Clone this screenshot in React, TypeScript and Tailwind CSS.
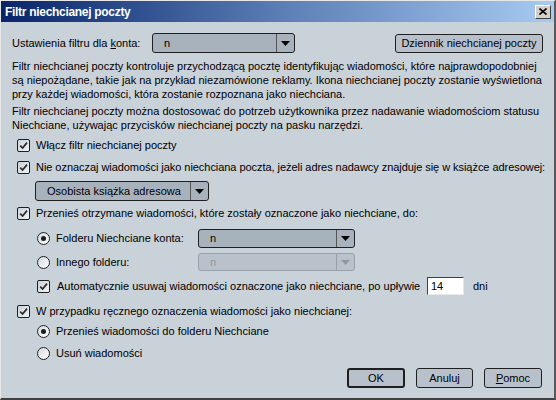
import React from "react";

const face = "font-['Liberation_Sans',Arial,sans-serif]";

function CheckBox() {
  return (
    <span className="flex h-[13px] w-[13px] shrink-0 items-center justify-center rounded-[2px] border border-[#1e1e1e] bg-linear-to-br from-[#c9d1d9] to-[#f2f4f6]">
      <svg width="9" height="9" viewBox="0 0 9 9">
        <path d="M1.2 4.6 L3.6 7 L8 1.6" stroke="#2a2a2a" strokeWidth="1.7" fill="none" />
      </svg>
    </span>
  );
}

function Radio({ checked }: { checked?: boolean }) {
  return (
    <span className="flex h-[13px] w-[13px] shrink-0 items-center justify-center rounded-full border border-[#222] bg-linear-to-br from-[#d3dae1] to-white">
      {checked && <span className="h-[5px] w-[5px] rounded-full bg-[#1c1c1c]" />}
    </span>
  );
}

function Arrow({ disabled }: { disabled?: boolean }) {
  return (
    <svg width="9" height="5" viewBox="0 0 9 5">
      <path d="M0 0 H9 L4.5 5 Z" fill={disabled ? "#8f98a2" : "#000"} />
    </svg>
  );
}

function Combo({
  value,
  className,
  disabled,
}: {
  value: string;
  className: string;
  disabled?: boolean;
}) {
  return (
    <div
      className={`flex items-stretch rounded-[3px] border ${
        disabled ? "border-[#96a0aa] bg-[#b9c2cb] text-[#8d96a0]" : "border-[#1f1f1f] bg-[#a8b2bd] text-black"
      } ${className}`}
    >
      <span className="flex flex-1 items-center pl-[11px]">{value}</span>
      <span
        className={`flex w-[18px] items-center justify-center border-l ${
          disabled ? "border-[#96a0aa]" : "border-[#555]"
        }`}
      >
        <Arrow disabled={disabled} />
      </span>
    </div>
  );
}

function Btn({ children, className = "" }: { children: React.ReactNode; className?: string }) {
  return (
    <button className={`flex items-center justify-center rounded-[3px] border border-[#1f1f1f] bg-[#b8c1cb] text-black ${className}`}>
      {children}
    </button>
  );
}

export default function App() {
  return (
    <div className={`${face} h-[400px] w-[556px] overflow-hidden whitespace-nowrap border-t border-l border-t-[#e8e8e8] border-l-[#e8e8e8] border-r-2 border-b-2 border-r-[#5a5a5a] border-b-[#404040] bg-[#c9d1d9] text-[11px] text-black`}>
      {/* title bar */}
      <div className="flex h-[21px] items-center bg-linear-to-r from-[#0a246a] via-[#5a7db4] to-[#a8cbf2] pl-[4px] pr-[3px]">
        <span className="text-[12px] font-bold tracking-[-0.3px] text-white">Filtr niechcianej poczty</span>
        <span className="ml-auto flex h-[14px] w-[16px] items-center justify-center border border-t-white border-l-white border-r-[#404040] border-b-[#404040] bg-[#d4d0c8]">
          <svg width="8" height="7" viewBox="0 0 8 7">
            <path d="M0.5 0.5 L7.5 6.5 M7.5 0.5 L0.5 6.5" stroke="#000" strokeWidth="1.6" />
          </svg>
        </span>
      </div>

      <div className="pl-[11px] pr-[11px]">
        {/* account row */}
        <div className="mt-[11px] flex h-[20px] items-center">
          <span className="w-[140px]">
            Ustawienia filtru dla <u>k</u>onta:
          </span>
          <Combo value="n" className="h-[20px] w-[143px]" />
          <Btn className="ml-auto h-[19px] w-[148px]">Dziennik niechcianej poczty</Btn>
        </div>

        {/* description */}
        <div className="mt-[6px] leading-[14px]">
          <div>Filtr niechcianej poczty kontroluje przychodzącą pocztę identyfikując wiadomości, które najprawdopodobniej</div>
          <div>są niepożądane, takie jak na przykład niezamówione reklamy. Ikona niechcianej poczty zostanie wyświetlona</div>
          <div>przy każdej wiadomości, która zostanie rozpoznana jako niechciana.</div>
        </div>
        <div className="mt-[3px] leading-[14px]">
          <div>Filtr niechcianej poczty można dostosować do potrzeb użytkownika przez nadawanie wiadomościom statusu</div>
          <div>Niechciane, używając przycisków niechcianej poczty na pasku narzędzi.</div>
        </div>

        {/* options */}
        <div className="mt-[5px] flex h-[16px] items-center gap-[6px] pl-[5px]">
          <CheckBox />
          <span>Włącz filtr niechcianej poczty</span>
        </div>
        <div className="mt-[6px] flex h-[16px] items-center gap-[6px] pl-[5px]">
          <CheckBox />
          <span className="tracking-[-0.05px]">Nie oznaczaj wiadomości jako niechciana poczta, jeżeli adres nadawcy znajduje się w książce adresowej:</span>
        </div>
        <div className="mt-[6px] pl-[23px]">
          <Combo value="Osobista książka adresowa" className="h-[20px] w-[174px]" />
        </div>
        <div className="mt-[4px] flex h-[16px] items-center gap-[6px] pl-[5px]">
          <CheckBox />
          <span>Przenieś otrzymane wiadomości, które zostały oznaczone jako niechciane, do:</span>
        </div>

        <div className="mt-[8px] flex h-[19px] items-center pl-[25px]">
          <Radio checked />
          <span className="ml-[6px] w-[142px]">Folderu Niechciane konta:</span>
          <Combo value="n" className="h-[19px] w-[157px]" />
        </div>
        <div className="mt-[5px] flex h-[18px] items-center pl-[25px]">
          <Radio />
          <span className="ml-[6px] w-[142px]">Innego folderu:</span>
          <Combo value="n" disabled className="h-[18px] w-[157px]" />
        </div>
        <div className="mt-[6px] flex h-[18px] items-center pl-[25px]">
          <CheckBox />
          <span className="ml-[7px] w-[370px]">Automatycznie usuwaj wiadomości oznaczone jako niechciane, po upływie</span>
          <span className="flex h-[18px] w-[37px] items-center border border-t-[#404040] border-l-[#404040] border-r-[#e8e8e8] border-b-[#e8e8e8] bg-white pl-[3px]">
            14
          </span>
          <span className="ml-[9px]">dni</span>
        </div>

        <div className="mt-[8px] flex h-[16px] items-center gap-[6px] pl-[5px]">
          <CheckBox />
          <span>W przypadku ręcznego oznaczenia wiadomości jako niechcianej:</span>
        </div>
        <div className="mt-[4px] flex h-[16px] items-center gap-[6px] pl-[25px]">
          <Radio checked />
          <span>Przenieś wiadomości do folderu Niechciane</span>
        </div>
        <div className="mt-[6px] flex h-[16px] items-center gap-[6px] pl-[25px]">
          <Radio />
          <span>Usuń wiadomości</span>
        </div>

        {/* buttons */}
        <div className="mt-[7px] flex justify-end gap-[11px] pr-[1px]">
          <Btn className="h-[20px] w-[58px] border-2">OK</Btn>
          <Btn className="h-[20px] w-[57px]">Anuluj</Btn>
          <Btn className="h-[20px] w-[58px]">
            <u>P</u>omoc
          </Btn>
        </div>
      </div>
    </div>
  );
}
